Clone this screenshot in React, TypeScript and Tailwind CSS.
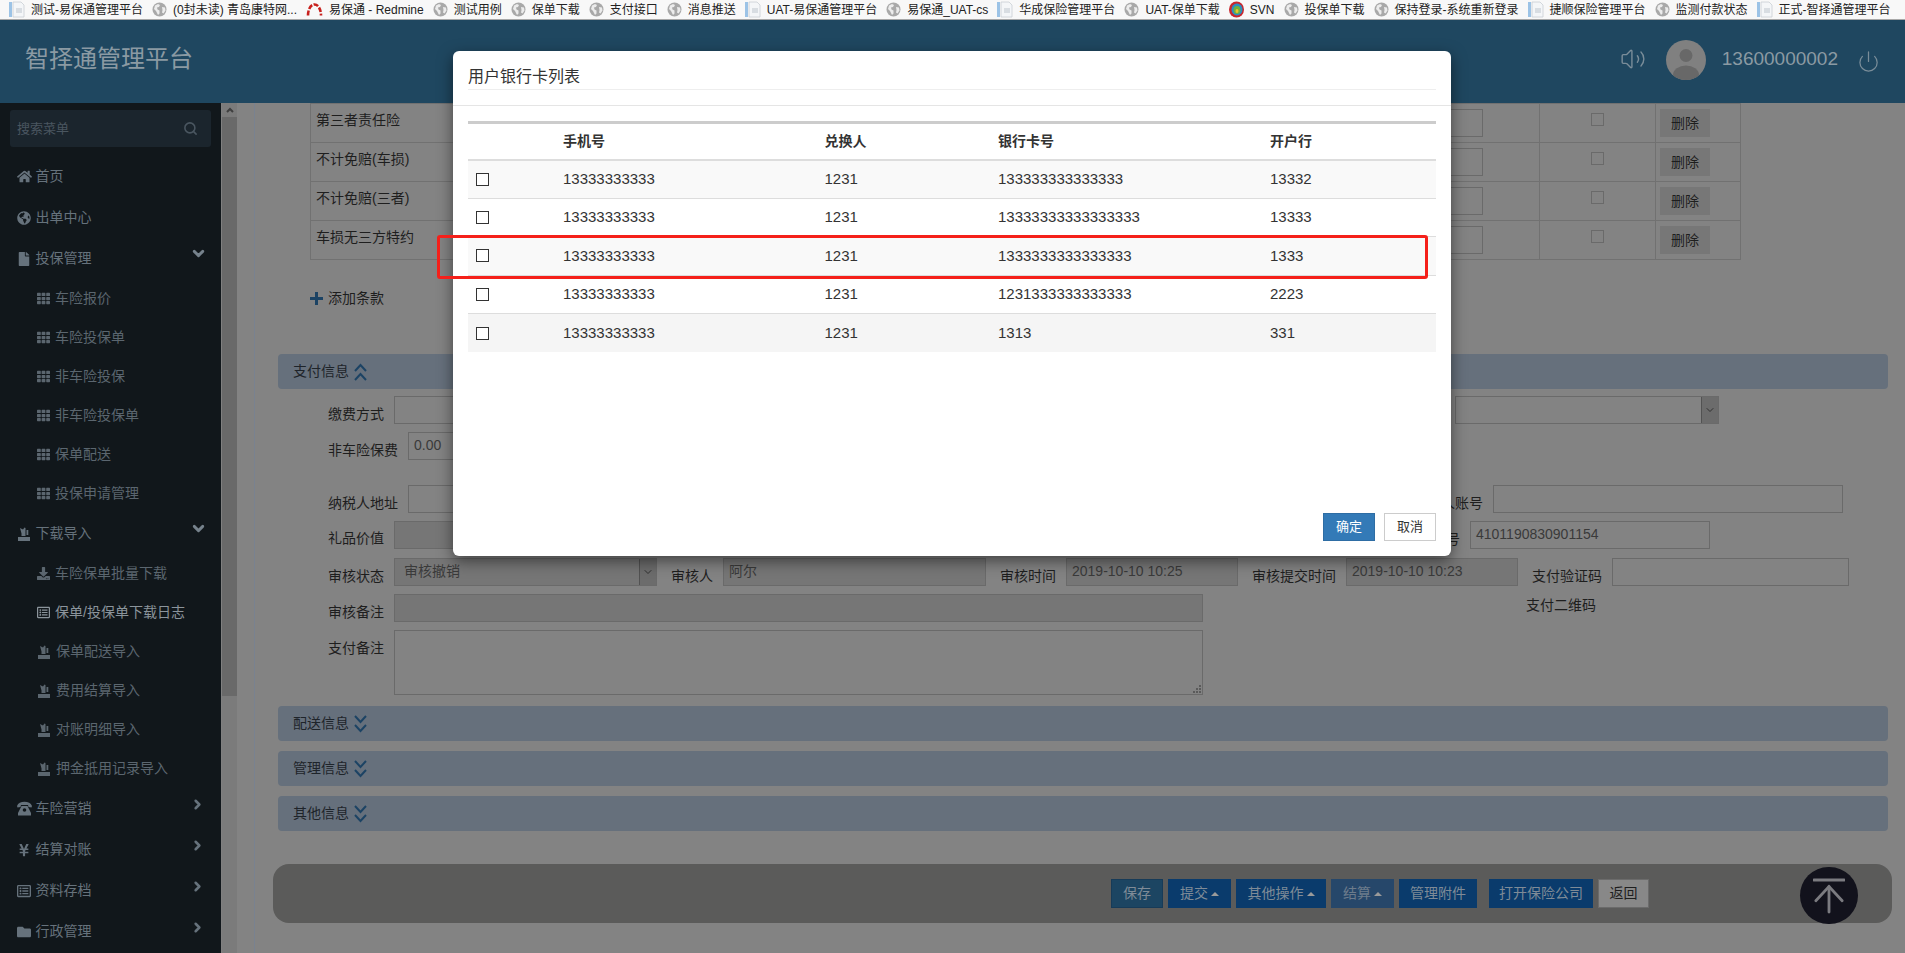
import type { ReactNode } from "react";
import { ChevronDown, ChevronRight, Power, Search, Volume2 } from "lucide-react";
import { FaFile, FaFolder, FaGlobeAmericas, FaHome, FaRegListAlt, FaTh, FaYenSign, FaDownload } from "react-icons/fa";

function GlobeIcon() {
  return (
    <svg width="15" height="15" viewBox="0 0 15 15" className="shrink-0">
      <circle cx="7.5" cy="7.5" r="7" fill="#a9a9a9" />
      <path d="M3 3.5l3-1.5 2 1-1 2-2 .5.5 2 2 1v3l-1.5 1.5L4 9 2 7zM10 5l3 .5.5 3-2 3-1.5-1 .5-2.5z" fill="#ececec" />
    </svg>
  );
}

function DocIcon() {
  return (
    <svg width="16" height="17" viewBox="0 0 16 17" className="shrink-0">
      <rect x="0" y="1" width="3" height="15" fill="#9cc3e6" />
      <path d="M4 1h8l3 3v12H4z" fill="#f4f6f8" stroke="#c9ced3" strokeWidth="0.8" />
      <rect x="7" y="7" width="6" height="5" fill="#d8dde2" />
    </svg>
  );
}

function RedmineIcon() {
  return (
    <svg width="17" height="15" viewBox="0 0 17 15" className="shrink-0">
      <path d="M2 13.5C2 7 5 2.5 8.500 2.500S15 7 15 13.500" fill="none" stroke="#c8201c" strokeWidth="2.600" strokeDasharray="5 1.500" />
    </svg>
  );
}

function SvnIcon() {
  return (
    <svg width="15" height="17" viewBox="0 0 15 17" className="shrink-0">
      <ellipse cx="7.500" cy="8.500" rx="7.500" ry="8" fill="#c9262c" />
      <ellipse cx="8" cy="8.500" rx="5.500" ry="6" fill="#2a8fc4" />
      <ellipse cx="8" cy="9" rx="3.500" ry="4" fill="#6fb13f" />
      <ellipse cx="8" cy="10" rx="1.500" ry="2" fill="#e8c52c" />
    </svg>
  );
}

function ImportIcon({ size = 14 }: { size?: number }) {
  return (
    <svg width={size} height={size} viewBox="0 0 14 14" fill="currentColor" className="shrink-0">
      <path d="M1 10h12v4H1z" />
      <path d="M3 1l3 1.500L7.500.5l1 .5v8H4.500V6.500z" />
      <path d="M9.500 3h1.800v5H9.500z" />
    </svg>
  );
}

function PhoneIcon() {
  return (
    <svg width="15" height="15" viewBox="0 0 15 15" fill="currentColor" className="shrink-0">
      <path d="M0 5C1 2 4 .8 7.500.8S14 2 15 5l-.5 1.500-3-.5-.5-2H4l-.5 2-3 .5z" />
      <path d="M4.500 5h6l3.500 7v2.500H1V12z" />
      <circle cx="7.500" cy="9" r="1.800" fill="#11171b" />
    </svg>
  );
}

function DoubleChevron({ up = false }: { up?: boolean }) {
  return (
    <svg width="13" height="18" viewBox="0 0 13 18" fill="none" stroke="#1c4364" strokeWidth="2" className={up ? "rotate-180" : ""}>
      <path d="M1 1l5.500 6L12 1" />
      <path d="M1 10l5.500 6L12 10" />
    </svg>
  );
}

const bookmarks: { icon: ReactNode; text: string }[] = [
  { icon: <DocIcon />, text: "测试-易保通管理平台" },
  { icon: <GlobeIcon />, text: "(0封未读) 青岛康特网..." },
  { icon: <RedmineIcon />, text: "易保通 - Redmine" },
  { icon: <GlobeIcon />, text: "测试用例" },
  { icon: <GlobeIcon />, text: "保单下载" },
  { icon: <GlobeIcon />, text: "支付接口" },
  { icon: <GlobeIcon />, text: "消息推送" },
  { icon: <DocIcon />, text: "UAT-易保通管理平台" },
  { icon: <GlobeIcon />, text: "易保通_UAT-cs" },
  { icon: <DocIcon />, text: "华成保险管理平台" },
  { icon: <GlobeIcon />, text: "UAT-保单下载" },
  { icon: <SvnIcon />, text: "SVN" },
  { icon: <GlobeIcon />, text: "投保单下载" },
  { icon: <GlobeIcon />, text: "保持登录-系统重新登录" },
  { icon: <DocIcon />, text: "捷顺保险管理平台" },
  { icon: <GlobeIcon />, text: "监测付款状态" },
  { icon: <DocIcon />, text: "正式-智择通管理平台" },
];

type MenuItem = { label: string; icon: ReactNode; child?: boolean; arrow?: "down" | "right"; active?: boolean };

const grid = <FaTh size={13} className="shrink-0" />;
const imp = <ImportIcon />;

const menu: MenuItem[] = [
  { label: "首页", icon: <FaHome size={15} className="shrink-0" /> },
  { label: "出单中心", icon: <FaGlobeAmericas size={14} className="shrink-0" /> },
  { label: "投保管理", icon: <FaFile size={14} className="shrink-0" />, arrow: "down" },
  { label: "车险报价", icon: grid, child: true },
  { label: "车险投保单", icon: grid, child: true },
  { label: "非车险投保", icon: grid, child: true },
  { label: "非车险投保单", icon: grid, child: true },
  { label: "保单配送", icon: grid, child: true },
  { label: "投保申请管理", icon: grid, child: true },
  { label: "下载导入", icon: imp, arrow: "down" },
  { label: "车险保单批量下载", icon: <FaDownload size={13} className="shrink-0" />, child: true },
  { label: "保单/投保单下载日志", icon: <FaRegListAlt size={13} className="shrink-0" />, child: true, active: true },
  { label: "保单配送导入", icon: imp, child: true },
  { label: "费用结算导入", icon: imp, child: true },
  { label: "对账明细导入", icon: imp, child: true },
  { label: "押金抵用记录导入", icon: imp, child: true },
  { label: "车险营销", icon: <PhoneIcon />, arrow: "right" },
  { label: "结算对账", icon: <FaYenSign size={14} className="shrink-0" />, arrow: "right" },
  { label: "资料存档", icon: <FaRegListAlt size={14} className="shrink-0" />, arrow: "right" },
  { label: "行政管理", icon: <FaFolder size={14} className="shrink-0" />, arrow: "right" },
];

function Sidebar() {
  return (
    <aside className="w-[221px] shrink-0 bg-[#11171b] h-full overflow-hidden">
      <div className="mx-[10px] mt-[7px] mb-[9px] h-[37px] w-[201px] rounded-[3px] bg-[#1b252d] flex items-center justify-between pl-[7px] pr-[13px] text-[13px] text-[#4a5660]">
        <span>搜索菜单</span>
        <Search size={15} strokeWidth={2.500} />
      </div>
      {menu.map((m) =>
        m.child ? (
          <div key={m.label} className={`h-[39px] pl-[37px] flex items-center gap-[5px] text-[14px] ${m.active ? "text-[#8b949b]" : "text-[#5b666f]"}`}>
            {m.icon}
            <span>{m.label}</span>
          </div>
        ) : (
          <div key={m.label} className="h-[41px] pl-[17px] pr-[16px] flex items-center text-[14px] text-[#66727c]">
            <span className="w-[18.500px] shrink-0 flex">{m.icon}</span>
            <span className="flex-1">{m.label}</span>
            {m.arrow === "down" && <ChevronDown size={17} strokeWidth={4} className="mb-[10px] -mr-[2px] text-[#76828c]" />}
            {m.arrow === "right" && <ChevronRight size={15} strokeWidth={4} className="mb-[8px] text-[#66727c]" />}
          </div>
        )
      )}
    </aside>
  );
}

function Scrollbar() {
  return (
    <div className="w-[16px] shrink-0 h-full border-l border-[#808080] bg-[#7b7b7b] flex flex-col">
      <div className="h-[14px] flex items-center justify-center">
        <svg width="8" height="6" viewBox="0 0 8 6" fill="none" stroke="#3f3f3f" strokeWidth="2"><path d="M1 5l3-3 3 3" /></svg>
      </div>
      <div className="h-[579px] bg-[#696969]" />
    </div>
  );
}

function Row({ children, className = "mt-[8px]" }: { children: ReactNode; className?: string }) {
  return <div className={`h-[28px] flex pl-[50px] ${className}`}>{children}</div>;
}

function Label({ children, className = "" }: { children: ReactNode; className?: string }) {
  return <span className={`mt-[4px] h-[28px] leading-[28px] shrink-0 whitespace-nowrap text-[14px] text-[#1e1e1e] ${className}`}>{children}</span>;
}

function Box({ children, className = "" }: { children?: ReactNode; className?: string }) {
  return <div className={`h-[28px] shrink-0 border border-[#6a6a6a] px-[5px] text-[14px] leading-[24px] text-[#3a3a3a] whitespace-nowrap ${className}`}>{children}</div>;
}

function SelectArrow() {
  return (
    <div className="h-full w-[17px] border-l border-[#525252] bg-[#6c6c6c] flex items-center justify-center">
      <ChevronDown size={12} strokeWidth={1.500} className="text-[#1e1e1e]" />
    </div>
  );
}

function SectionBar({ title, up = false }: { title: string; up?: boolean }) {
  return (
    <div className="h-[35px] rounded-[4px] bg-[#66707c] pl-[15px] flex items-center gap-[5px] text-[14px] text-[#1e242a]">
      <span>{title}</span>
      <DoubleChevron up={up} />
    </div>
  );
}

const clauses = ["第三者责任险", "不计免赔(车损)", "不计免赔(三者)", "车损无三方特约"];

function ClauseTable() {
  return (
    <div className="ml-[32px] w-[1431px] border-l border-r border-[#717171] border-t">
      {clauses.map((c) => (
        <div key={c} className="h-[39px] border-b border-[#717171] flex text-[14px] text-[#1e1e1e]">
          <div className="flex-1 pl-[5px] pt-[6px]">{c}</div>
          <div className="w-[190px] shrink-0 pt-[5px] flex justify-end pr-[56px]">
            <div className="w-[130px] h-[28px] border border-[#6a6a6a]" />
          </div>
          <div className="w-[116px] shrink-0 border-l border-[#717171] flex justify-center pt-[9px]">
            <span className="block w-[13px] h-[13px] border border-[#6a6a6a]" />
          </div>
          <div className="w-[85px] shrink-0 border-l border-[#717171] pl-[4px] pt-[5px]">
            <div className="w-[50px] h-[28px] bg-[#777777] flex items-center justify-center">删除</div>
          </div>
        </div>
      ))}
    </div>
  );
}

function Content() {
  return (
    <main className="flex-1 min-w-0 h-full bg-[#838383] pl-[41px] pr-[17px] relative border-l-0">
      <div className="absolute left-[17px] top-0 bottom-0 w-px bg-[#798290]" />
      <ClauseTable />
      <div className="ml-[32px] mt-[19px] h-[38px] flex items-center gap-[5px] text-[14px] text-[#1e1e1e]">
        <svg width="13" height="13" viewBox="0 0 13 13" fill="#1c4364"><path d="M5 0h3v5h5v3H8v5H5V8H0V5h5z" /></svg>
        <span>添加条款</span>
      </div>
      <div className="mt-[37px]"><SectionBar title="支付信息" up /></div>

      <Row className="mt-[7px]">
        <Label className="w-[56px] mr-[10px]">缴费方式</Label>
        <Box className="w-[300px]" />
        <Box className="w-[264px] ml-[761px] !px-0 flex justify-end"><SelectArrow /></Box>
      </Row>
      <Row>
        <Label className="w-[70px] mr-[10px]">非车险保费</Label>
        <Box className="w-[200px]">0.00</Box>
      </Row>
      <Row className="mt-[25px]">
        <Label className="w-[70px] mr-[10px]">纳税人地址</Label>
        <Box className="w-[300px]" />
        <Label className="w-[70px] ml-[705px] mr-[10px]">纳税人账号</Label>
        <Box className="w-[350px]" />
      </Row>
      <Row>
        <Label className="w-[56px] mr-[10px] !mt-[3px]">礼品价值</Label>
        <Box className="w-[300px] bg-[#767676]" />
        <Label className="w-[28px] ml-[738px] mr-[10px]">税号</Label>
        <Box className="w-[240px]">4101190830901154</Box>
      </Row>
      <Row className="mt-[9px]">
        <Label className="w-[56px] mr-[10px]">审核状态</Label>
        <Box className="w-[263px] bg-[#767676] !pl-[9px] !pr-0 flex justify-between">
          <span>审核撤销</span>
          <SelectArrow />
        </Box>
        <Label className="w-[42px] ml-[14px] mr-[10px]">审核人</Label>
        <Box className="w-[263px] bg-[#767676]">阿尔</Box>
        <Label className="w-[56px] ml-[14px] mr-[10px]">审核时间</Label>
        <Box className="w-[172px] bg-[#767676]">2019-10-10 10:25</Box>
        <Label className="w-[84px] ml-[14px] mr-[10px]">审核提交时间</Label>
        <Box className="w-[172px] bg-[#767676]">2019-10-10 10:23</Box>
        <Label className="w-[70px] ml-[14px] mr-[10px]">支付验证码</Label>
        <Box className="w-[237px]" />
      </Row>
      <Row>
        <Label className="w-[56px] mr-[10px]">审核备注</Label>
        <Box className="w-[809px] bg-[#767676]" />
        <span className="ml-[323px] leading-[22px] text-[14px] text-[#1e1e1e]">支付二维码</span>
      </Row>
      <div className="mt-[8px] h-[65px] flex pl-[50px]">
        <Label className="w-[56px] mr-[10px]">支付备注</Label>
        <div className="w-[809px] h-[65px] border border-[#6a6a6a] flex items-end justify-end">
          <svg width="10" height="10" viewBox="0 0 10 10" fill="#5a5a5a">
            <rect x="7" y="1" width="2" height="2" /><rect x="4" y="4" width="2" height="2" /><rect x="7" y="4" width="2" height="2" />
            <rect x="1" y="7" width="2" height="2" /><rect x="4" y="7" width="2" height="2" /><rect x="7" y="7" width="2" height="2" />
          </svg>
        </div>
      </div>

      <div className="mt-[11px] flex flex-col gap-[10px]">
        <SectionBar title="配送信息" />
        <SectionBar title="管理信息" />
        <SectionBar title="其他信息" />
      </div>

      <div className="mt-[33px] -ml-[5px] w-[1619px] h-[59px] rounded-[16px] bg-[#5b5b5a] flex items-center pl-[838px] text-[14px]">
        <ActionButton className="w-[52px] bg-[#1c4562] border border-[#173b58]">保存</ActionButton>
        <ActionButton className="w-[63px] ml-[5px] bg-[#0a3b6c]" caret>提交</ActionButton>
        <ActionButton className="w-[90px] ml-[5px] bg-[#0a3b6c]" caret>其他操作</ActionButton>
        <ActionButton className="w-[63px] ml-[5px] bg-[#26476a] !text-[#6d7c8c]" caret>结算</ActionButton>
        <ActionButton className="w-[78px] ml-[5px] bg-[#0a3b6c]">管理附件</ActionButton>
        <ActionButton className="w-[104px] ml-[12px] bg-[#0a3b6c]">打开保险公司</ActionButton>
        <div className="w-[51px] h-[29px] ml-[5px] bg-[#888888] border border-[#6b6b6b] flex items-center justify-center text-[#1e1e1e]">返回</div>
      </div>
    </main>
  );
}

function ActionButton({ children, className = "", caret = false }: { children: ReactNode; className?: string; caret?: boolean }) {
  return (
    <div className={`h-[29px] flex items-center justify-center gap-[3px] text-[#7f8b97] ${className}`}>
      <span>{children}</span>
      {caret && <span className="w-0 h-0 border-x-[4px] border-x-transparent border-b-[4px] border-b-[#9a9a9a]" />}
    </div>
  );
}

const cards = [
  { card: "133333333333333", bank: "13332", bg: "bg-[#f9f9f9]" },
  { card: "13333333333333333", bank: "13333", bg: "bg-white" },
  { card: "1333333333333333", bank: "1333", bg: "bg-[#f9f9f9]" },
  { card: "1231333333333333", bank: "2223", bg: "bg-white" },
  { card: "1313", bank: "331", bg: "bg-[#f5f5f5]" },
];

function CardModal() {
  return (
    <div className="absolute left-[453px] top-[51px] w-[998px] h-[505px] rounded-[6px] bg-white shadow-[0_5px_15px_rgba(0,0,0,0.5)] flex flex-col">
      <div className="h-[55px] shrink-0 px-[15px] border-b border-[#e5e5e5]">
        <div className="h-[39px] pt-[14px] leading-[24px] border-b border-[#eeeeee] text-[16px] text-[#333]">用户银行卡列表</div>
      </div>
      <div className="flex-1 px-[15px] pt-[15px]">
        <table className="w-[968px] table-fixed border-collapse border-t-[3px] border-[#cccccc] text-[#333]">
          <colgroup>
            <col className="w-[87px]" />
            <col className="w-[261.500px]" />
            <col className="w-[173.500px]" />
            <col className="w-[272px]" />
            <col className="w-[174px]" />
          </colgroup>
          <thead>
            <tr className="h-[37px] border-b-2 border-[#dddddd] text-left text-[14px]">
              <th />
              <th className="pl-[8px] font-bold">手机号</th>
              <th className="pl-[8px] font-bold">兑换人</th>
              <th className="pl-[8px] font-bold">银行卡号</th>
              <th className="pl-[8px] font-bold">开户行</th>
            </tr>
          </thead>
          <tbody className="text-[15px]">
            {cards.map((r) => (
              <tr key={r.card} className={`h-[38.600px] border-t border-[#dddddd] first:border-t-0 ${r.bg}`}>
                <td className="pl-[8px]">
                  <input type="checkbox" className="appearance-none block w-[13px] h-[13px] border border-[#333] bg-white" />
                </td>
                <td className="pl-[8px]">13333333333</td>
                <td className="pl-[8px]">1231</td>
                <td className="pl-[8px]">{r.card}</td>
                <td className="pl-[8px]">{r.bank}</td>
              </tr>
            ))}
          </tbody>
        </table>
      </div>
      <div className="flex justify-end gap-[9px] pr-[15px] pb-[15px] text-[13px]">
        <button type="button" className="w-[52px] h-[28px] bg-[#337ab7] border border-[#2e6da4] text-white">确定</button>
        <button type="button" className="w-[52px] h-[28px] bg-white border border-[#cccccc] text-[#333]">取消</button>
      </div>
    </div>
  );
}

export default function App() {
  return (
    <div className="relative w-[1905px] h-[953px] overflow-hidden [font-family:'Liberation_Sans','Noto_Sans_CJK_SC',sans-serif]">
      <div className="h-[20px] bg-[#f8f8f8] border-b border-[#a8a8a8] flex items-center pl-[9px] gap-[9px] text-[12px] text-[#222] whitespace-nowrap overflow-hidden">
        {bookmarks.map((b) => (
          <div key={b.text} className="flex items-center gap-[6px] shrink-0">
            {b.icon}
            <span>{b.text}</span>
          </div>
        ))}
      </div>

      <header className="h-[83px] bg-[#1f4760] flex items-center pl-[25px] pr-[25px] text-[#8b9aa3]">
        <div className="flex-1 text-[24px] -mt-[5px]">智择通管理平台</div>
        <Volume2 size={26} strokeWidth={1.300} className="-mt-[5px] text-[#7a8d99]" />
        <svg width="40" height="40" viewBox="0 0 40 40" className="ml-[20px] -mt-[3px]">
          <clipPath id="avatar"><circle cx="20" cy="20" r="20" /></clipPath>
          <g clipPath="url(#avatar)">
            <rect width="40" height="40" fill="#808080" />
            <ellipse cx="20" cy="15.500" rx="6.500" ry="6.500" fill="#686868" />
            <ellipse cx="20" cy="35" rx="13" ry="9.500" fill="#686868" />
          </g>
        </svg>
        <span className="ml-[16px] text-[19px] -mt-[5px]">13600000002</span>
        <Power size={23} strokeWidth={1.300} className="ml-[19px] text-[#7a8d99]" />
      </header>

      <div className="flex h-[850px] overflow-hidden">
        <Sidebar />
        <Scrollbar />
        <Content />
      </div>

      <CardModal />

      {/* red mark drawn over the screenshot */}
      <div className="absolute left-[437px] top-[235px] w-[991px] h-[44px] border-[3px] border-[#f5201a] rounded-[3px]" />

      <div className="absolute left-[1800px] top-[867px] w-[58px] h-[57px] rounded-full bg-[#12121c] flex items-center justify-center">
        <svg width="32" height="36" viewBox="0 0 34 38" fill="none" stroke="#7b7b80" strokeWidth="3" strokeLinecap="round">
          <path d="M1 2h32" />
          <path d="M17 36V9" />
          <path d="M3 24L17 9l14 15" />
        </svg>
      </div>
    </div>
  );
}
